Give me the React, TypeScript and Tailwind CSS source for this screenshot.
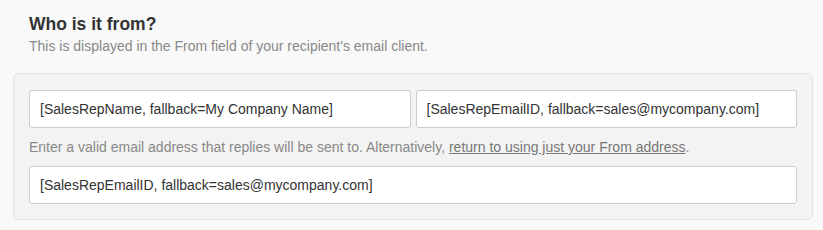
import React from 'react';

const inputClass =
  'h-[38px] w-full rounded-[3px] border border-[#cccccc] bg-white px-[10px] text-[14px] text-[#333333] outline-none';

export default function App() {
  return (
    <div className="h-[230px] w-[823px] bg-[#f9f9f9] font-['Liberation_Sans',Arial,sans-serif]">
      <div className="pl-[29px] pt-[13px]">
        <h2 className="text-[17.5px] font-bold leading-[22px] text-[#333333]">Who is it from?</h2>
        <p className="mt-[2px] text-[14px] leading-[18px] text-[#888888]">
          This is displayed in the From field of your recipient's email client.
        </p>
      </div>

      <div className="ml-[13px] mt-[18px] w-[800px] rounded-[5px] border border-[#e2e2e2] bg-[#f3f3f3] px-[15px] pb-[15px] pt-[16px]">
        <div className="grid grid-cols-2 gap-[5px]">
          <input className={inputClass} defaultValue="[SalesRepName, fallback=My Company Name]" />
          <input className={inputClass} defaultValue="[SalesRepEmailID, fallback=sales@mycompany.com]" />
        </div>
        <p className="my-[10px] text-[14px] leading-[18px] text-[#888888]">
          Enter a valid email address that replies will be sent to. Alternatively,{' '}
          <a href="#" className="text-[#777777] underline">
            return to using just your From address
          </a>
          .
        </p>
        <input className={inputClass} defaultValue="[SalesRepEmailID, fallback=sales@mycompany.com]" />
      </div>
    </div>
  );
}
